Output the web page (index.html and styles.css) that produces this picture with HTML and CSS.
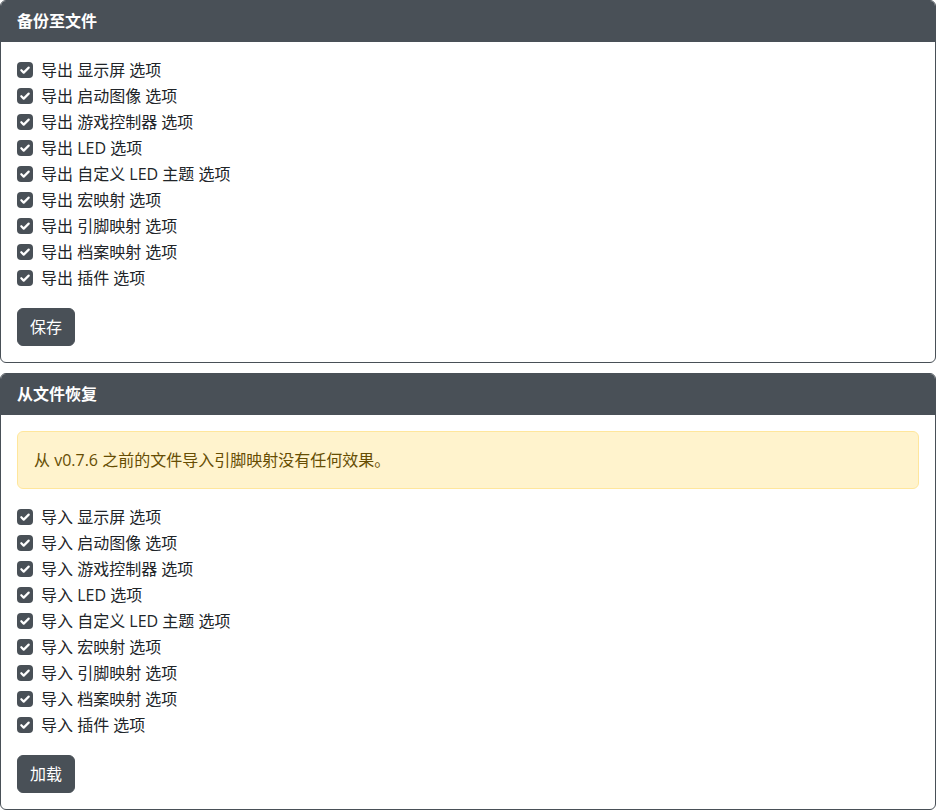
FILE: index.html
```html
<!DOCTYPE html>
<html lang="zh">
<head>
<meta charset="utf-8">
<link rel="stylesheet" href="styles.css">
</head>
<body>
<div class="card">
  <div class="card-header">备份至文件</div>
  <div class="card-body">
    <ul class="checks">
      <li><span class="box"><svg viewBox="0 0 16 16"><path d="M4.3 8.2l2.4 2.4 5-5"/></svg></span>导出 显示屏 选项</li>
      <li><span class="box"><svg viewBox="0 0 16 16"><path d="M4.3 8.2l2.4 2.4 5-5"/></svg></span>导出 启动图像 选项</li>
      <li><span class="box"><svg viewBox="0 0 16 16"><path d="M4.3 8.2l2.4 2.4 5-5"/></svg></span>导出 游戏控制器 选项</li>
      <li><span class="box"><svg viewBox="0 0 16 16"><path d="M4.3 8.2l2.4 2.4 5-5"/></svg></span>导出 LED 选项</li>
      <li><span class="box"><svg viewBox="0 0 16 16"><path d="M4.3 8.2l2.4 2.4 5-5"/></svg></span>导出 自定义 LED 主题 选项</li>
      <li><span class="box"><svg viewBox="0 0 16 16"><path d="M4.3 8.2l2.4 2.4 5-5"/></svg></span>导出 宏映射 选项</li>
      <li><span class="box"><svg viewBox="0 0 16 16"><path d="M4.3 8.2l2.4 2.4 5-5"/></svg></span>导出 引脚映射 选项</li>
      <li><span class="box"><svg viewBox="0 0 16 16"><path d="M4.3 8.2l2.4 2.4 5-5"/></svg></span>导出 档案映射 选项</li>
      <li><span class="box"><svg viewBox="0 0 16 16"><path d="M4.3 8.2l2.4 2.4 5-5"/></svg></span>导出 插件 选项</li>
    </ul>
    <button class="btn">保存</button>
  </div>
</div>
<div class="card">
  <div class="card-header">从文件恢复</div>
  <div class="card-body">
    <div class="alert">从 v0.7.6 之前的文件导入引脚映射没有任何效果。</div>
    <ul class="checks">
      <li><span class="box"><svg viewBox="0 0 16 16"><path d="M4.3 8.2l2.4 2.4 5-5"/></svg></span>导入 显示屏 选项</li>
      <li><span class="box"><svg viewBox="0 0 16 16"><path d="M4.3 8.2l2.4 2.4 5-5"/></svg></span>导入 启动图像 选项</li>
      <li><span class="box"><svg viewBox="0 0 16 16"><path d="M4.3 8.2l2.4 2.4 5-5"/></svg></span>导入 游戏控制器 选项</li>
      <li><span class="box"><svg viewBox="0 0 16 16"><path d="M4.3 8.2l2.4 2.4 5-5"/></svg></span>导入 LED 选项</li>
      <li><span class="box"><svg viewBox="0 0 16 16"><path d="M4.3 8.2l2.4 2.4 5-5"/></svg></span>导入 自定义 LED 主题 选项</li>
      <li><span class="box"><svg viewBox="0 0 16 16"><path d="M4.3 8.2l2.4 2.4 5-5"/></svg></span>导入 宏映射 选项</li>
      <li><span class="box"><svg viewBox="0 0 16 16"><path d="M4.3 8.2l2.4 2.4 5-5"/></svg></span>导入 引脚映射 选项</li>
      <li><span class="box"><svg viewBox="0 0 16 16"><path d="M4.3 8.2l2.4 2.4 5-5"/></svg></span>导入 档案映射 选项</li>
      <li><span class="box"><svg viewBox="0 0 16 16"><path d="M4.3 8.2l2.4 2.4 5-5"/></svg></span>导入 插件 选项</li>
    </ul>
    <button class="btn">加载</button>
  </div>
</div>
</body>
</html>
```
FILE: styles.css
```css
html, body {
  margin: 0;
  padding: 0;
  background: #fff;
}
body {
  font-family: "Open Sans", "Noto Sans CJK SC", sans-serif;
  font-size: 16px;
  line-height: 24px;
  color: #212529;
}
.card {
  border: 1px solid #495057;
  border-radius: 6px;
  overflow: hidden;
  margin-bottom: 10px;
}
.card-header {
  background: #495057;
  color: #fff;
  font-weight: 700;
  padding: 8px 16px;
  border-bottom: 1px solid #495057;
}
.card-body {
  padding: 16px;
}
.alert {
  background: #fff3cd;
  border: 1px solid #ffe69c;
  color: #664d03;
  border-radius: 6px;
  padding: 16px;
  margin-bottom: 16px;
}
.checks {
  list-style: none;
  margin: 0;
  padding: 0 0 16px;
}
.checks li {
  display: flex;
  align-items: center;
  gap: 8px;
  height: 24px;
  margin-bottom: 2px;
}
.box {
  width: 16px;
  height: 16px;
  border-radius: 4px;
  background: #495057;
  display: inline-flex;
}
.box svg {
  width: 16px;
  height: 16px;
}
.box path {
  fill: none;
  stroke: #fff;
  stroke-width: 2.2;
  stroke-linecap: round;
  stroke-linejoin: round;
}
.btn {
  font-family: inherit;
  font-size: 16px;
  line-height: 24px;
  color: #fff;
  background: #495057;
  border: 1px solid #495057;
  border-radius: 6px;
  padding: 6px 12px;
  display: block;
}
```
